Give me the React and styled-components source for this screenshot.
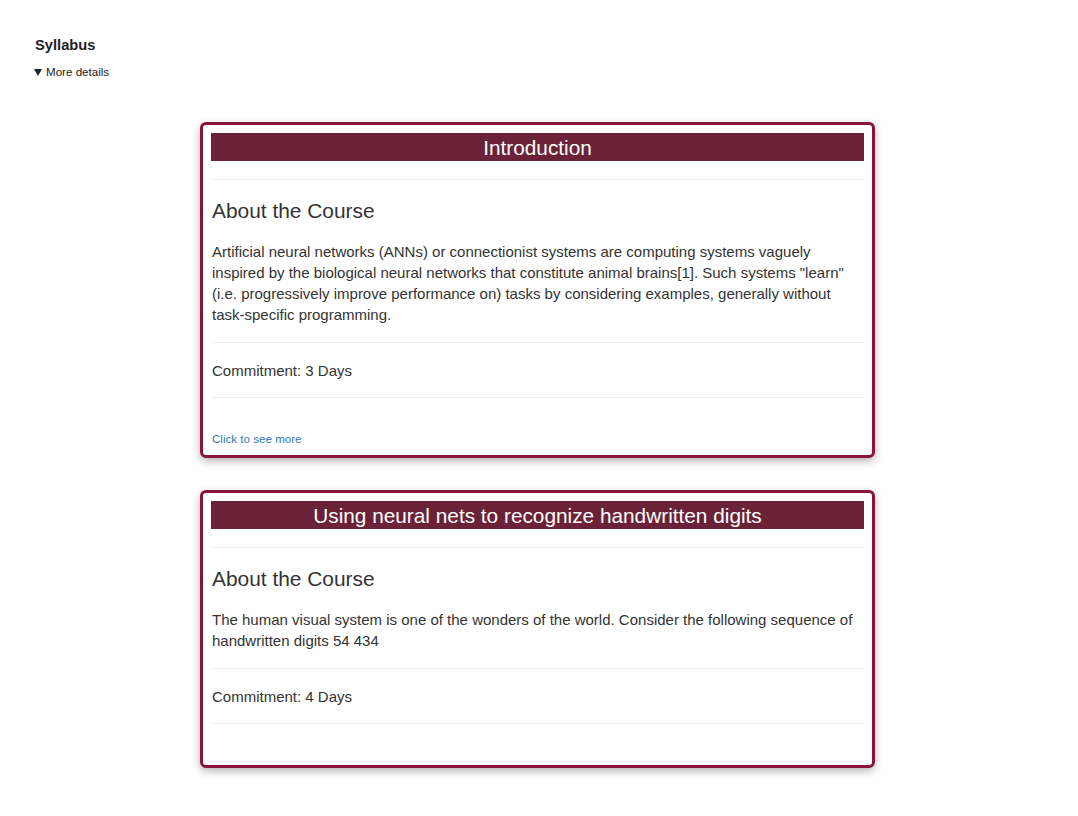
import React from "react";
import styled, { createGlobalStyle } from "styled-components";

const GlobalStyle = createGlobalStyle`
  html, body { margin: 0; padding: 0; background: #fff; }
  body {
    font-family: "Liberation Sans", Arial, Helvetica, sans-serif;
    font-size: 14px;
    color: #333;
  }
  * { box-sizing: border-box; }
`;

const Page = styled.div`
  padding: 35px 0 40px 34px;
`;

const Title = styled.div`
  font-weight: bold;
  font-size: 14.7px;
  line-height: 20px;
  color: #222;
  padding-left: 1px;
`;

const Details = styled.div`
  display: flex;
  align-items: center;
  gap: 4px;
  margin-top: 9px;
  font-size: 11.6px;
  line-height: 16px;
  color: #222;
`;

const CardList = styled.div`
  display: flex;
  flex-direction: column;
  gap: 32px;
  margin-top: 42px;
  padding-left: 166px;
`;

const Card = styled.section`
  width: 675px;
  border: 3px solid #8a1538;
  border-radius: 6px;
  padding: 8px;
  background: #fff;
  box-shadow: 0 3px 8px rgba(0, 0, 0, 0.3);
`;

const Header = styled.h2`
  margin: 0;
  height: 28px;
  line-height: 29px;
  background: #6b2238;
  color: #fff;
  font-size: 20.8px;
  font-weight: normal;
  text-align: center;
`;

const Divider = styled.hr`
  border: 0;
  border-top: 1px solid #eee;
  margin: ${(p) => (p.$first ? "18px 0 0" : "17px 0 0")};
`;

const Heading = styled.h3`
  margin: 20px 0 19px;
  font-size: 20.9px;
  line-height: 22px;
  font-weight: normal;
  color: #333;
  padding-left: 1px;
`;

const Text = styled.p`
  margin: 0;
  font-size: 15px;
  line-height: 21px;
  padding-left: 1px;
`;

const Commitment = styled.div`
  margin-top: 17px;
  font-size: 15px;
  line-height: 20px;
  padding-left: 1px;
  padding-top: 0.5px;
  height: 20px;
`;

const Footer = styled.div`
  padding-top: 32px;
  min-height: 33px;
`;

const MoreLink = styled.a`
  display: block;
  font-size: 11.6px;
  line-height: 17px;
  color: #337ab7;
  text-decoration: none;
  padding-left: 1px;
  cursor: pointer;
`;

const courses = [
  {
    title: "Introduction",
    text:
      'Artificial neural networks (ANNs) or connectionist systems are computing systems vaguely inspired by the biological neural networks that constitute animal brains[1]. Such systems "learn" (i.e. progressively improve performance on) tasks by considering examples, generally without task-specific programming.',
    days: 3,
    more: true,
  },
  {
    title: "Using neural nets to recognize handwritten digits",
    text:
      "The human visual system is one of the wonders of the world. Consider the following sequence of handwritten digits 54 434",
    days: 4,
    more: false,
  },
];

export default function App() {
  return (
    <>
      <GlobalStyle />
      <Page>
        <Title>Syllabus</Title>
        <Details>
          <svg width="8" height="7" viewBox="0 0 8 7">
            <polygon points="0,0 8,0 4,7" fill="#222" />
          </svg>
          <span>More details</span>
        </Details>
        <CardList>
          {courses.map((c) => (
            <Card key={c.title}>
              <Header>{c.title}</Header>
              <Divider $first />
              <Heading>About the Course</Heading>
              <Text>{c.text}</Text>
              <Divider />
              <Commitment>Commitment: {c.days} Days</Commitment>
              <Divider />
              <Footer>{c.more && <MoreLink>Click to see more</MoreLink>}</Footer>
            </Card>
          ))}
        </CardList>
      </Page>
    </>
  );
}
